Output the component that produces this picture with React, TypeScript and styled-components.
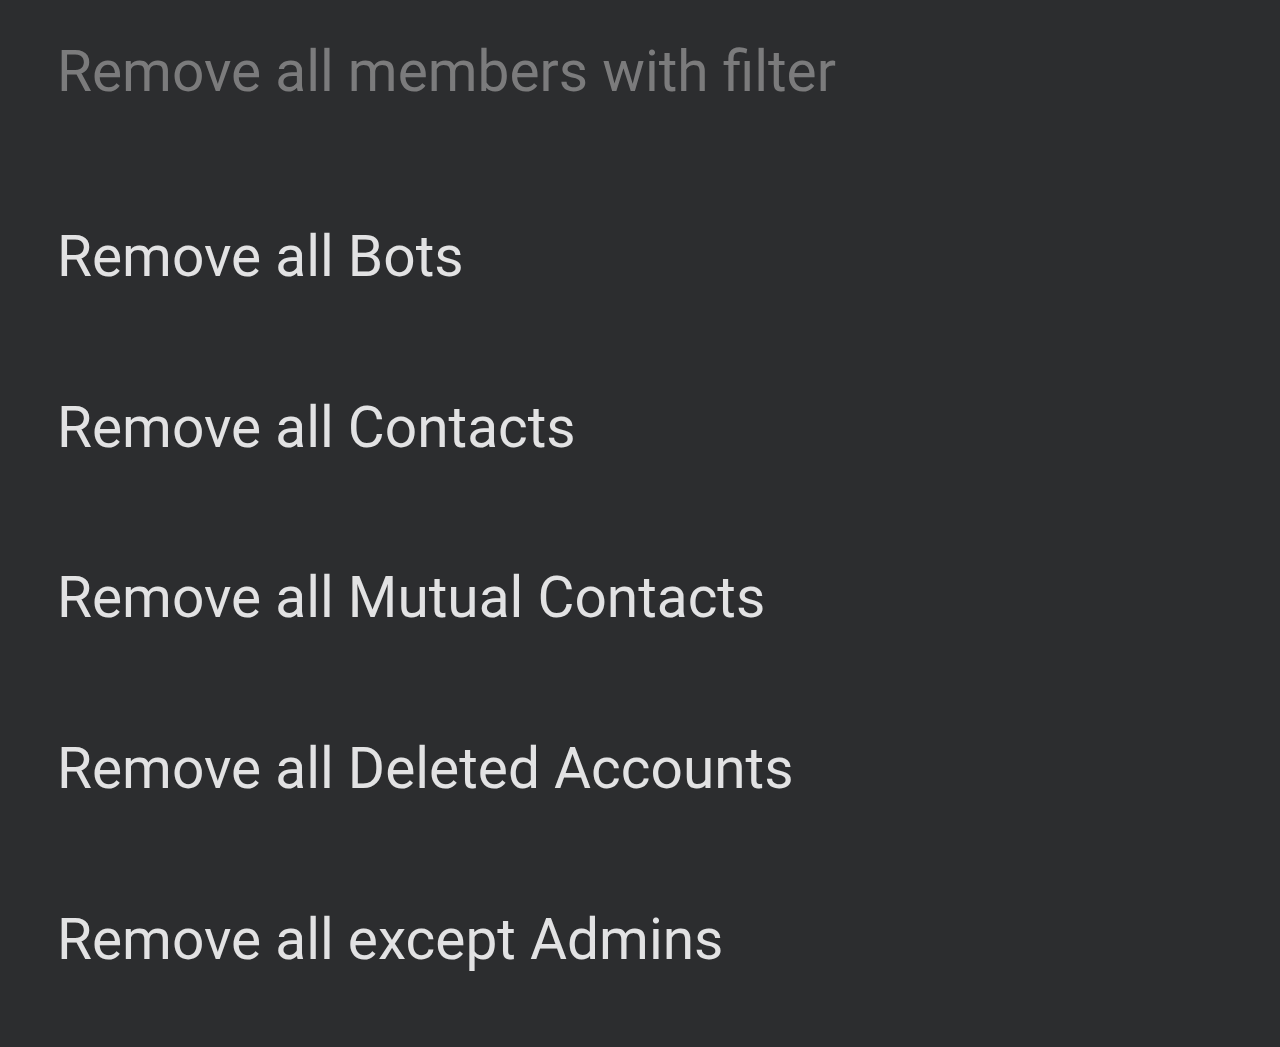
import React from "react";
import styled, { createGlobalStyle } from "styled-components";

const Global = createGlobalStyle`
  html, body {
    margin: 0;
    padding: 0;
    background: #2c2d2f;
  }
  body {
    font-family: Roboto, "Noto Sans", sans-serif;
  }
`;

const Sheet = styled.div`
  width: 1280px;
  height: 1047px;
  background: #2c2d2f;
  display: flex;
  flex-direction: column;
  padding: 38px 0 0 57px;
  box-sizing: border-box;
  overflow: hidden;
`;

const Title = styled.div`
  font-size: 56.8px;
  line-height: normal;
  color: #7b7b7c;
  margin-bottom: 67px;
  white-space: nowrap;
`;

const Item = styled.div`
  height: 170.7px;
  line-height: 170.7px;
  font-size: 56.8px;
  color: #e2e2e3;
  white-space: nowrap;
`;

const items = [
  "Remove all Bots",
  "Remove all Contacts",
  "Remove all Mutual Contacts",
  "Remove all Deleted Accounts",
  "Remove all except Admins",
];

export default function App() {
  return (
    <>
      <Global />
      <Sheet>
        <Title>Remove all members with filter</Title>
        {items.map((t) => (
          <Item key={t}>{t}</Item>
        ))}
      </Sheet>
    </>
  );
}
